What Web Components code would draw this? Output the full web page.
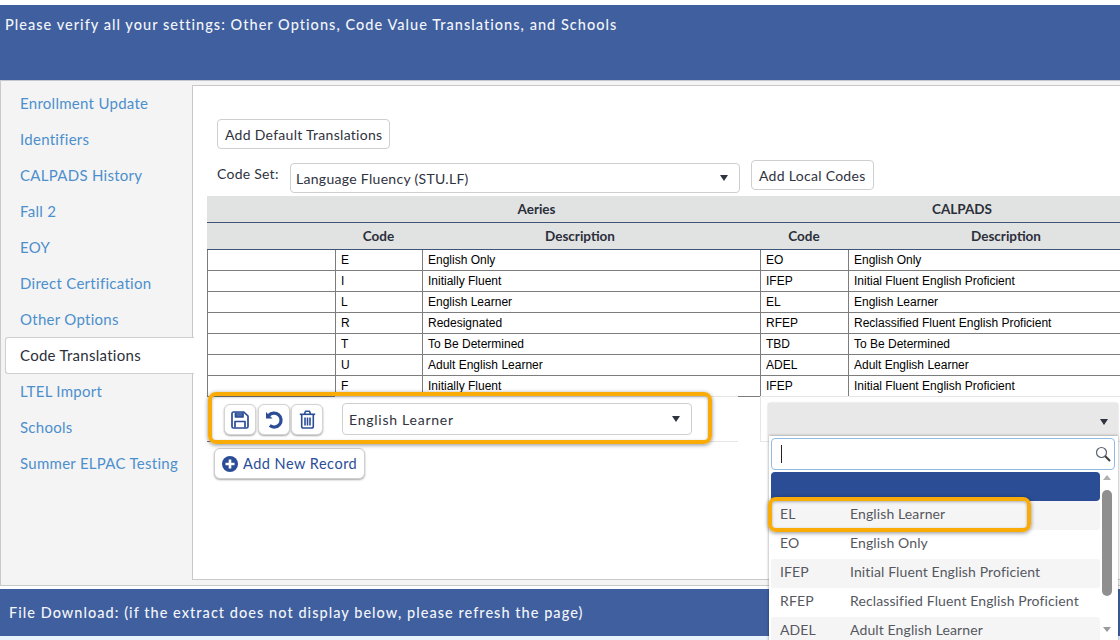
<!DOCTYPE html>
<html>
<head>
<meta charset="utf-8">
<style>
  html, body { margin: 0; height: 640px; overflow: hidden; background: #e9f3fb; font-family: "Lato", "Liberation Sans", sans-serif; }
</style>
</head>
<body>
<wizard-page>
  <blue-bar slot="top" tall>Please verify all your settings: Other Options, Code Value Translations, and Schools</blue-bar>
  <side-nav slot="nav">
    <nav-link>Enrollment Update</nav-link>
    <nav-link>Identifiers</nav-link>
    <nav-link>CALPADS History</nav-link>
    <nav-link>Fall 2</nav-link>
    <nav-link>EOY</nav-link>
    <nav-link>Direct Certification</nav-link>
    <nav-link>Other Options</nav-link>
    <nav-link active>Code Translations</nav-link>
    <nav-link>LTEL Import</nav-link>
    <nav-link>Schools</nav-link>
    <nav-link>Summer ELPAC Testing</nav-link>
  </side-nav>
  <code-panel slot="main"></code-panel>
  <blue-bar slot="bottom">File Download: (if the extract does not display below, please refresh the page)</blue-bar>
</wizard-page>

<script>
class WizardPage extends HTMLElement {
  connectedCallback() {
    this.attachShadow({ mode: 'open' }).innerHTML = `
    <style>
      :host { display: flex; flex-direction: column; height: 640px; padding-top: 5px; box-sizing: border-box; background: #fff; }
      .mid { display: flex; height: 506px; background: #f4f4f4; border: 1px solid #c9c9c9; border-top: 1px solid #c4c7cc; border-right: 0; margin-bottom: 3px; box-sizing: border-box; flex: none; }
      .end { flex: 1; background: #e9f3fb; }
    </style>
    <slot name="top"></slot>
    <div class="mid"><slot name="nav"></slot><slot name="main"></slot></div>
    <slot name="bottom"></slot>
    <div class="end"></div>`;
  }
}
customElements.define('wizard-page', WizardPage);

class BlueBar extends HTMLElement {
  connectedCallback() {
    const h = this.hasAttribute('tall') ? 75 : 47;
    const pad = this.hasAttribute('tall') ? '11px 5px 0' : '15px 9px 0';
    this.attachShadow({ mode: 'open' }).innerHTML = `
    <style>
      :host { display: block; flex: none; height: ${h}px; padding: ${pad}; box-sizing: border-box; background: #3f5f9f; color: #f3f5f9; font-size: 14.5px; line-height: 18px; letter-spacing: 1.04px; font-weight: 500; white-space: nowrap; }
    </style><slot></slot>`;
  }
}
customElements.define('blue-bar', BlueBar);

class SideNav extends HTMLElement {
  connectedCallback() {
    this.attachShadow({ mode: 'open' }).innerHTML = `
    <style>
      :host { display: flex; flex-direction: column; flex: none; width: 191px; padding-top: 4px; box-sizing: border-box; }
    </style><slot></slot>`;
  }
}
customElements.define('side-nav', SideNav);

class NavLink extends HTMLElement {
  connectedCallback() {
    this.attachShadow({ mode: 'open' }).innerHTML = `
    <style>
      :host { display: block; height: 36px; line-height: 36px; padding-left: 15px; margin-left: 4px; font-size: 15px; letter-spacing: .28px; color: #4c8fcd; box-sizing: border-box; white-space: nowrap; }
      :host([active]) { background: #fff; color: #2b2f3a; border: 1px solid #cfcfcf; border-right: 0; border-radius: 3px 0 0 3px; margin-right: -2px; padding-left: 14px; line-height: 35px; height: 37px; margin-bottom: -1px; position: relative; z-index: 1; }
    </style><slot></slot>`;
  }
}
customElements.define('nav-link', NavLink);

class PlainBtn extends HTMLElement {
  connectedCallback() {
    this.attachShadow({ mode: 'open' }).innerHTML = `
    <style>
      :host { display: inline-flex; align-items: center; justify-content: center; height: 30px; padding: 0 7px; box-sizing: border-box; background: #fff; border: 1px solid #cfcfcf; border-radius: 4px; font-size: 14px; letter-spacing: .29px; color: #2f3340; white-space: nowrap; }
      :host([raised]) { color: #2a4d96; box-shadow: 0 1px 2px rgba(0,0,0,.35); }
    </style><slot></slot>`;
  }
}
customElements.define('plain-btn', PlainBtn);

class SelectBox extends HTMLElement {
  connectedCallback() {
    this.attachShadow({ mode: 'open' }).innerHTML = `
    <style>
      :host { display: flex; align-items: center; justify-content: space-between; height: 30px; padding: 0 11px 0 5px; box-sizing: border-box; background: #fff; border: 1px solid #cfcfcf; border-radius: 4px; font-size: 14px; letter-spacing: .3px; color: #2f3340; }
      i { width: 0; height: 0; border: 4px solid transparent; border-top: 6px solid #2f3340; border-bottom: 0; }
    </style><span><slot></slot></span><i></i>`;
  }
}
customElements.define('select-box', SelectBox);

class TableRow extends HTMLElement {
  connectedCallback() {
    const c = (this.getAttribute('cells') || '').split('|');
    this.attachShadow({ mode: 'open' }).innerHTML = `
    <style>
      :host { display: grid; grid-template-columns: 128px 87px 338px 88px 272px; height: 21px; box-sizing: border-box; border-bottom: 1px solid #7d7d7d; font: 12px/20px "Liberation Sans", Arial, sans-serif; color: #000; overflow: hidden; }
      div { border-left: 1px solid #7d7d7d; padding-left: 5px; white-space: nowrap; box-sizing: border-box; }
      div:first-child { padding: 0; }
    </style>
    <div></div><div>${c[0]}</div><div>${c[1]}</div><div>${c[2]}</div><div>${c[3]}</div>`;
  }
}
customElements.define('table-row', TableRow);

class IconBtn extends HTMLElement {
  connectedCallback() {
    this.attachShadow({ mode: 'open' }).innerHTML = `
    <style>
      :host { display: flex; align-items: center; justify-content: center; width: 32px; height: 31px; box-sizing: border-box; background: #fff; border: 1px solid #d4d4d4; border-radius: 6px; box-shadow: 0 1px 2px rgba(0,0,0,.35); }
    </style><slot></slot>`;
  }
}
customElements.define('icon-btn', IconBtn);

class CallOut extends HTMLElement {
  connectedCallback() {
    this.attachShadow({ mode: 'open' }).innerHTML = `
    <style>
      :host { display: block; position: absolute; box-sizing: border-box; border: 4px solid #f9ab08; border-radius: 8px; box-shadow: 0 1px 4px rgba(0,0,0,.45), inset 0 1px 3px rgba(0,0,0,.3); pointer-events: none; z-index: 5; }
    </style>`;
  }
}
customElements.define('call-out', CallOut);

class ComboList extends HTMLElement {
  connectedCallback() {
    const rows = [['EL','English Learner'],['EO','English Only'],['IFEP','Initial Fluent English Proficient'],['RFEP','Reclassified Fluent English Proficient'],['ADEL','Adult English Learner']];
    this.attachShadow({ mode: 'open' }).innerHTML = `
    <style>
      :host { display: block; position: absolute; left: 575px; top: 317px; width: 350px; z-index: 4; font-size: 14px; letter-spacing: .12px; color: #55585f; }
      .trigger { height: 33px; background: #e8e8e8; border-radius: 3px 3px 0 0; display: flex; justify-content: flex-end; align-items: center; padding: 4px 10px 0 0; box-sizing: border-box; box-shadow: 0 0 2px rgba(0,0,0,.25); }
      .trigger i { width: 0; height: 0; border: 4px solid transparent; border-top: 6px solid #2f3340; border-bottom: 0; }
      .drop { height: 210px; margin-left: 1px; background: #fff; box-shadow: 0 0 3px rgba(0,0,0,.45); border-radius: 0 0 4px 4px; padding: 2px 3px 0 2px; box-sizing: border-box; overflow: hidden; display: flex; flex-direction: column; gap: 2px; }
      .search { height: 32px; flex: none; border: 1px solid #8fbbe3; border-radius: 4px; box-sizing: border-box; display: flex; align-items: center; justify-content: space-between; padding: 0 3px 0 9px; }
      .caret { width: 1px; height: 18px; background: #222; }
      .body { display: flex; gap: 2px; }
      .list { width: 329px; flex: none; }
      .blue { height: 29px; background: #2a4d96; border-radius: 4px; }
      .opt { display: grid; grid-template-columns: 70px 1fr; height: 29px; line-height: 26px; padding-left: 9px; border-radius: 3px; white-space: nowrap; }
      .opt:nth-child(even) { background: #f5f5f5; }
      .bar { width: 10px; position: relative; }
      .thumb { position: absolute; top: 18px; left: 0; width: 10px; height: 106px; border-radius: 5px; background: #8f8f8f; }
      .up, .down { position: absolute; left: 1px; width: 0; height: 0; border: 4px solid transparent; }
      .up { top: 3px; border-bottom: 5px solid #b0b0b0; border-top: 0; }
      .down { top: 155px; border-top: 5px solid #9a9a9a; border-bottom: 0; }
    </style>
    <div class="trigger"><i></i></div>
    <div class="drop">
      <div class="search"><span class="caret"></span>
        <svg width="16" height="16" viewBox="0 0 16 16" fill="none"><circle cx="6.5" cy="6.5" r="5" stroke="#5a6470" stroke-width="1.2"/><path d="M10.3 10.3 15 15" stroke="#3d3d3d" stroke-width="2"/></svg>
      </div>
      <div class="body">
        <div class="list"><div class="blue"></div>${rows.map(r => `<div class="opt"><span>${r[0]}</span><span>${r[1]}</span></div>`).join('')}</div>
        <div class="bar"><i class="up"></i><i class="thumb"></i><i class="down"></i></div>
      </div>
    </div>`;
  }
}
customElements.define('combo-list', ComboList);

class CodePanel extends HTMLElement {
  connectedCallback() {
    this.attachShadow({ mode: 'open' }).innerHTML = `
    <style>
      :host { display: block; position: relative; flex: 1; min-width: 0; margin-top: 4px; margin-bottom: 5px; background: #fff; border: 1px solid #c9c9c9; border-right: 0; box-sizing: border-box; padding: 33px 0 0 14px; overflow: visible; }
      .top { padding-left: 10px; }
      .set { display: flex; align-items: flex-start; padding-left: 10px; margin-top: 12px; height: 35px; font-size: 14px; letter-spacing: .25px; color: #2f3340; }
      .set label { width: 73px; line-height: 22px; padding-top: 2px; }
      .set plain-btn { margin-top: -1px; }
      select-box { width: 450px; margin-top: 2px; margin-right: 11px; }
      .heads { width: 913px; background: #e1e3e3; font-size: 13.5px; font-weight: 700; color: #2b2f3a; text-align: center; overflow: hidden; }
      .h1, .h2 { display: grid; box-sizing: border-box; height: 27px; line-height: 27px; border-bottom: 1px solid #3f5578; white-space: nowrap; }
      .h1 { grid-template-columns: 128px 403px 22px 404px; }
      .h2 { grid-template-columns: 128px 87px 316px 22px 88px 316px; }
      .rows { width: 913px; height: 146px; overflow: hidden; }
      .edit { width: 913px; height: 46px; display: flex; }
      .edit > div { box-sizing: border-box; height: 46px; flex: none; }
      .tools { width: 128px; padding: 7px 0 0 17px; display: flex; gap: 1.5px; border-top: 1px solid #7d7d7d; border-bottom: 1px solid #7d7d7d; }
      .pick { width: 403px; border-top: 1px solid #e6e6e6; border-bottom: 1px solid #e6e6e6; }
      .gap { width: 22px; border-top: 1px solid #7d7d7d; }
      .rest { width: 360px; border-top: 1px solid #e6e6e6; border-left: 1px solid #e6e6e6; border-bottom: 1px solid #e6e6e6; }
      .pick select-box { width: 350px; height: 32px; margin: 6px 0 0 7px; padding-left: 6px; letter-spacing: .75px; }
      .add { margin: 6px 0 0 7px; }
      .add svg { margin-right: 5px; }
      plain-btn[raised] { height: 31px; padding: 0 7px; border-radius: 6px; font-size: 14.5px; letter-spacing: .5px; }
    </style>
    <div class="top"><plain-btn>Add Default Translations</plain-btn></div>
    <div class="set"><label>Code Set:</label><select-box>Language Fluency (STU.LF)</select-box><plain-btn>Add Local Codes</plain-btn></div>
    <div class="heads">
      <div class="h1"><span></span><span>Aeries</span><span></span><span>CALPADS</span></div>
      <div class="h2"><span></span><span>Code</span><span>Description</span><span></span><span>Code</span><span>Description</span></div>
    </div>
    <div class="rows">
      <table-row cells="E|English Only|EO|English Only"></table-row>
      <table-row cells="I|Initially Fluent|IFEP|Initial Fluent English Proficient"></table-row>
      <table-row cells="L|English Learner|EL|English Learner"></table-row>
      <table-row cells="R|Redesignated|RFEP|Reclassified Fluent English Proficient"></table-row>
      <table-row cells="T|To Be Determined|TBD|To Be Determined"></table-row>
      <table-row cells="U|Adult English Learner|ADEL|Adult English Learner"></table-row>
      <table-row cells="F|Initially Fluent|IFEP|Initial Fluent English Proficient"></table-row>
    </div>
    <div class="edit">
      <div class="tools">
        <icon-btn><svg width="18" height="18" viewBox="0 0 18 18" fill="none" stroke="#2a4d96" stroke-width="1.7" stroke-linejoin="round"><path d="M2.300 1h10.500l4.200 4v10.500a1.500 1.500 0 0 1-1.500 1.500H2.500A1.500 1.500 0 0 1 1 15.500V2.500A1.500 1.500 0 0 1 2.300 1z"/><path d="M4.500 1.500v4.500h7.500V1.500" fill="#2a4d96" fill-opacity=".85"/><path d="M4 16.500V10.500h10v6"/></svg></icon-btn>
        <icon-btn><svg width="20" height="20" viewBox="0 0 20 20" fill="none" stroke="#2a4d96" stroke-width="3.200"><path d="M4.800 5.400A7 7 0 1 1 5.800 15.600"/><path d="M2 2v6.500h6.500z" fill="#2a4d96" stroke="none"/></svg></icon-btn>
        <icon-btn><svg width="17" height="19" viewBox="0 0 17 19" fill="none" stroke="#2a4d96" stroke-width="1.600" stroke-linejoin="round"><path d="M.8 4.300h15.400"/><path d="M5.500 4 6.500 1.300h4l1 2.700"/><path d="M2.700 4.500v12a1.500 1.500 0 0 0 1.500 1.500h8.600a1.500 1.500 0 0 0 1.500-1.500v-12"/><path d="M6 7.500v8M8.500 7.500v8M11 7.500v8"/></svg></icon-btn>
      </div>
      <div class="pick"><select-box>English Learner</select-box></div>
      <div class="gap"></div>
      <div class="rest"></div>
    </div>
    <div class="add"><plain-btn raised><svg width="16" height="16" viewBox="0 0 16 16"><circle cx="8" cy="8" r="8" fill="#2a4d96"/><path d="M8 3.500v9M3.500 8h9" stroke="#fff" stroke-width="2.600"/></svg>Add New Record</plain-btn></div>
    <call-out style="left:15px;top:306px;width:504px;height:52px"></call-out>
    <combo-list></combo-list>
    <call-out style="left:575px;top:411px;width:263px;height:35px"></call-out>`;
  }
}
customElements.define('code-panel', CodePanel);
</script>
</body>
</html>
